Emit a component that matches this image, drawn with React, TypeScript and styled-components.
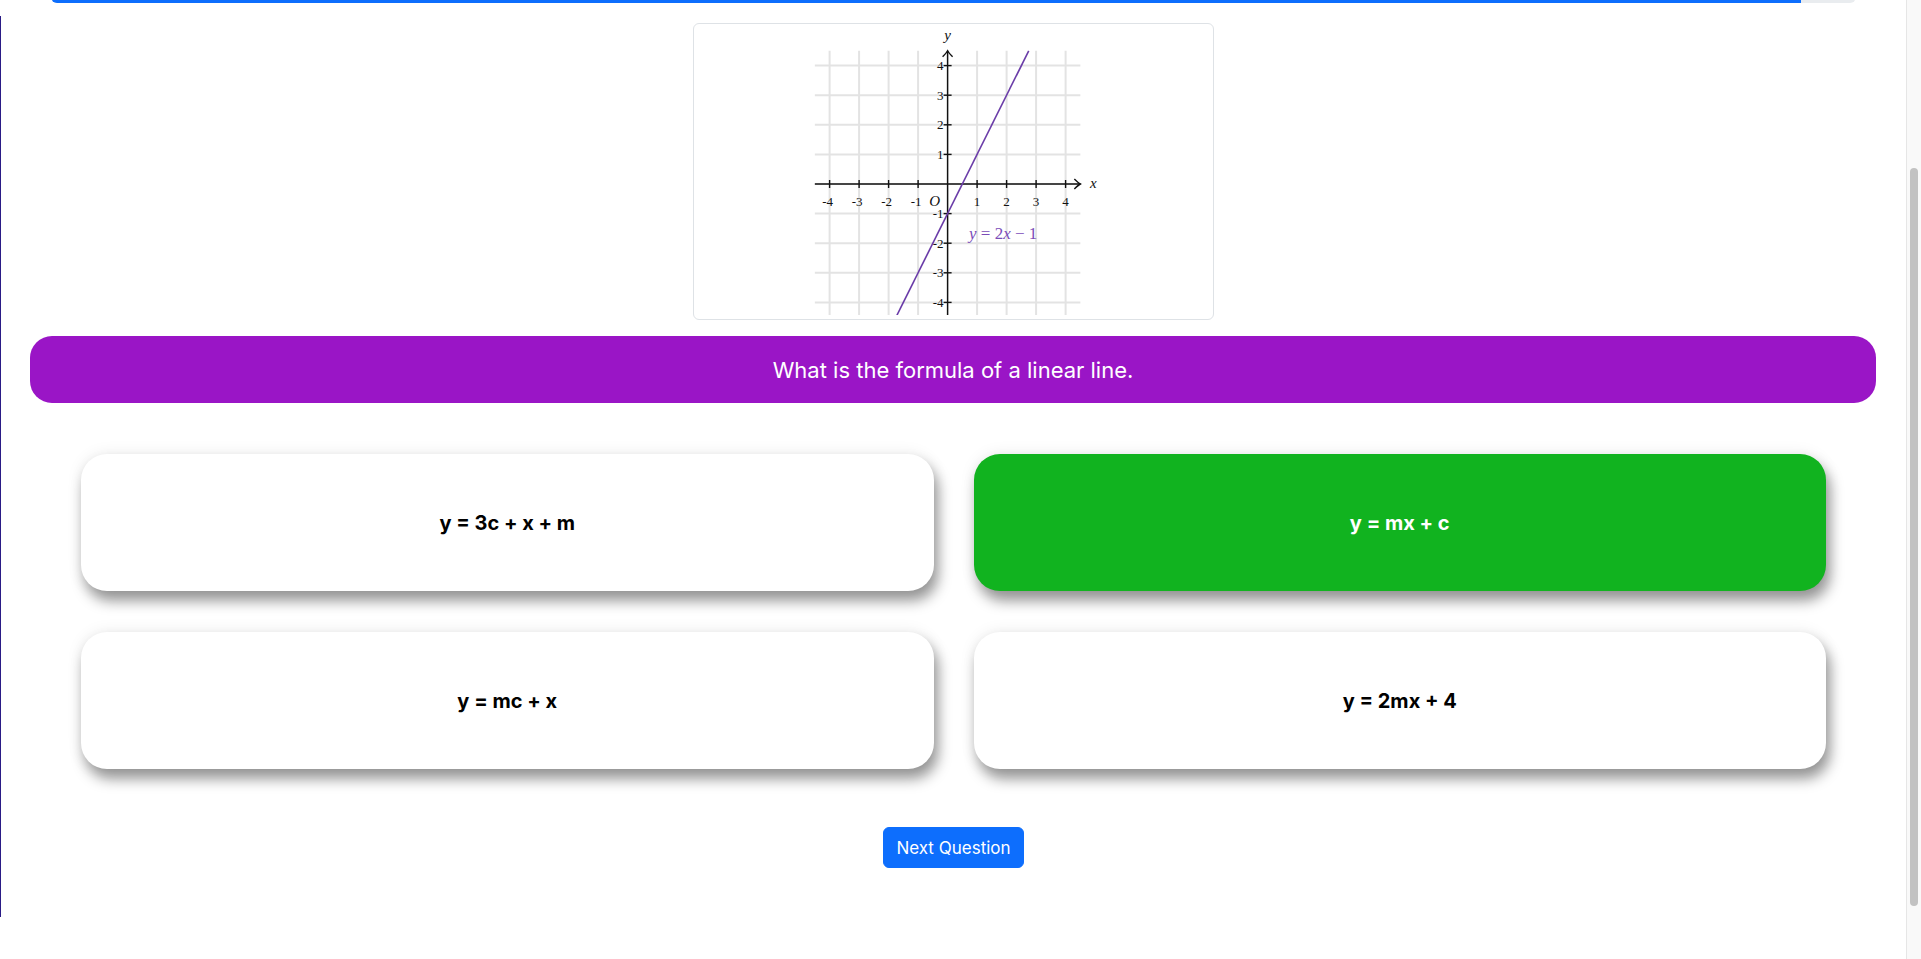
import React, { useLayoutEffect } from "react";
import styled, { createGlobalStyle } from "styled-components";

const GlobalStyle = createGlobalStyle`
  html, body {
    margin: 0;
    padding: 0;
    background: #fff;
  }
  body {
    font-family: Inter, "Noto Sans", "Liberation Sans", sans-serif;
    color: #212529;
  }
  * {
    box-sizing: border-box;
  }
`;

const Page = styled.div`
  width: calc(100% - 15px);
  padding-bottom: 110px;
`;

const ScrollTrack = styled.div`
  position: fixed;
  top: 0;
  right: 0;
  width: 15px;
  height: 100vh;
  background: #f9f9f9;
  border-left: 1px solid #e6e6e6;
  padding: 168px 3px 0 3px;
`;

const ScrollThumb = styled.div`
  height: 738px;
  border-radius: 5px;
  background: #c2c2c2;
`;

const TopArea = styled.div`
  height: 206px;
`;

const Progress = styled.div`
  height: 16px;
  margin: 0 50px 0 51px;
  background: #e9ecef;
  border-radius: 6px;
  overflow: hidden;
  display: flex;
`;

const ProgressFill = styled.div`
  height: 100%;
  background: #0d6efd;
`;

const QuizBox = styled.div`
  margin-top: 13px;
  padding: 7px 0 49px;
  border-left: 1px solid #2a1b86;
  display: flex;
  flex-direction: column;
  align-items: center;
`;

const Thumb = styled.div`
  width: 521px;
  height: 297px;
  padding: 4px;
  border: 1px solid #dee2e6;
  border-radius: 6px;
  background: #fff;
  margin-bottom: 16px;
  svg {
    display: block;
  }
`;

const Question = styled.div`
  align-self: stretch;
  margin: 0 30px 51px 29px;
  height: 67px;
  border-radius: 22px;
  background: #9a15c6;
  color: #fff;
  font-size: 22px;
  display: flex;
  align-items: center;
  justify-content: center;
`;

const Answers = styled.div`
  align-self: stretch;
  display: grid;
  grid-template-columns: 1fr 1fr;
  column-gap: 40px;
  row-gap: 41px;
  padding: 0 80px 0 80px;
`;

const Answer = styled.button<{ $correct?: boolean }>`
  height: 137px;
  border: none;
  border-radius: 26px;
  background: ${(p) => (p.$correct ? "#11b31f" : "#fff")};
  color: ${(p) => (p.$correct ? "#fff" : "#000")};
  font-family: Inter, "Noto Sans", sans-serif;
  font-size: 20px;
  font-weight: 700;
  box-shadow: 4px 10px 14px rgba(0, 0, 0, 0.4), 0 0 16px rgba(0, 0, 0, 0.08);
  cursor: pointer;
`;

const NextButton = styled.button`
  margin-top: 58px;
  width: 141px;
  height: 41px;
  border: 1px solid #0d6efd;
  border-radius: 6px;
  background: #0d6efd;
  color: #fff;
  font-family: Inter, "Noto Sans", sans-serif;
  font-size: 17px;
  cursor: pointer;
`;

// graph geometry (image pixels)
const OX = 249.6;
const OY = 156;
const UX = 29.5;
const UY = 29.6;
const X = (v: number) => OX + v * UX;
const Y = (v: number) => OY - v * UY;
const units = [-4, -3, -2, -1, 0, 1, 2, 3, 4];
const serif = '"Liberation Serif", "DejaVu Serif", serif';

function LineGraph() {
  return (
    <svg width="511" height="287" viewBox="0 0 511 287">
      {units.map((v) => (
        <g key={"g" + v} stroke="#e3e3e3" strokeWidth="2">
          <line x1={X(v)} y1={Y(4.5)} x2={X(v)} y2={Y(-4.5)} />
          <line x1={X(-4.5)} y1={Y(v)} x2={X(4.5)} y2={Y(v)} />
        </g>
      ))}
      <g stroke="#111" strokeWidth="1.4" fill="none">
        <line x1={X(-4.5)} y1={OY} x2={X(4.5)} y2={OY} />
        <line x1={OX} y1={Y(-4.5)} x2={OX} y2={Y(4.5)} />
        <path d={`M${X(4.5) - 6} ${OY - 5} Q${X(4.5) - 2} ${OY - 1} ${X(4.5)} ${OY} Q${X(4.5) - 2} ${OY + 1} ${X(4.5) - 6} ${OY + 5}`} />
        <path d={`M${OX - 5} ${Y(4.5) + 6} Q${OX - 1} ${Y(4.5) + 2} ${OX} ${Y(4.5)} Q${OX + 1} ${Y(4.5) + 2} ${OX + 5} ${Y(4.5) + 6}`} />
        {units
          .filter((v) => v !== 0)
          .map((v) => (
            <g key={"t" + v}>
              <line x1={X(v)} y1={OY - 4} x2={X(v)} y2={OY + 4} />
              <line x1={OX - 4} y1={Y(v)} x2={OX + 4} y2={Y(v)} />
            </g>
          ))}
      </g>
      <g fontFamily={serif} fontSize="13" fill="#111">
        {units
          .filter((v) => v !== 0)
          .map((v) => (
            <g key={"l" + v}>
              <text x={X(v) - (v < 0 ? 2 : 0)} y={OY + 22} textAnchor="middle">
                {v}
              </text>
              <text x={OX - 4} y={Y(v) + 4.5} textAnchor="end">
                {v}
              </text>
            </g>
          ))}
        <text x={OX - 13} y={OY + 22} textAnchor="middle" fontStyle="italic" fontSize="15">
          O
        </text>
        <text x={OX} y={12} textAnchor="middle" fontStyle="italic" fontSize="15">
          y
        </text>
        <text x={X(4.5) + 13} y={OY + 4} textAnchor="middle" fontStyle="italic" fontSize="15">
          x
        </text>
      </g>
      <line x1={X(-1.75)} y1={Y(-4.5)} x2={X(2.75)} y2={Y(4.5)} stroke="#6a3ca8" strokeWidth="1.6" />
      <text x="271" y="211" fontFamily={serif} fontSize="17" fill="#7b4cb8">
        <tspan fontStyle="italic">y</tspan> = 2<tspan fontStyle="italic">x</tspan> − 1
      </text>
    </svg>
  );
}

const answers = [
  { text: "y = 3c + x + m", correct: false },
  { text: "y = mx + c", correct: true },
  { text: "y = mc + x", correct: false },
  { text: "y = 2mx + 4", correct: false },
];

export default function App() {
  useLayoutEffect(() => {
    window.scrollTo(0, 219);
  }, []);

  return (
    <Page>
      <GlobalStyle />
      <TopArea />
      <Progress>
        <ProgressFill style={{ width: "96.95%" }} />
      </Progress>
      <QuizBox>
        <Thumb>
          <LineGraph />
        </Thumb>
        <Question>What is the formula of a linear line.</Question>
        <Answers>
          {answers.map((a) => (
            <Answer key={a.text} $correct={a.correct}>
              {a.text}
            </Answer>
          ))}
        </Answers>
        <NextButton>Next Question</NextButton>
      </QuizBox>
      <ScrollTrack>
        <ScrollThumb />
      </ScrollTrack>
    </Page>
  );
}
